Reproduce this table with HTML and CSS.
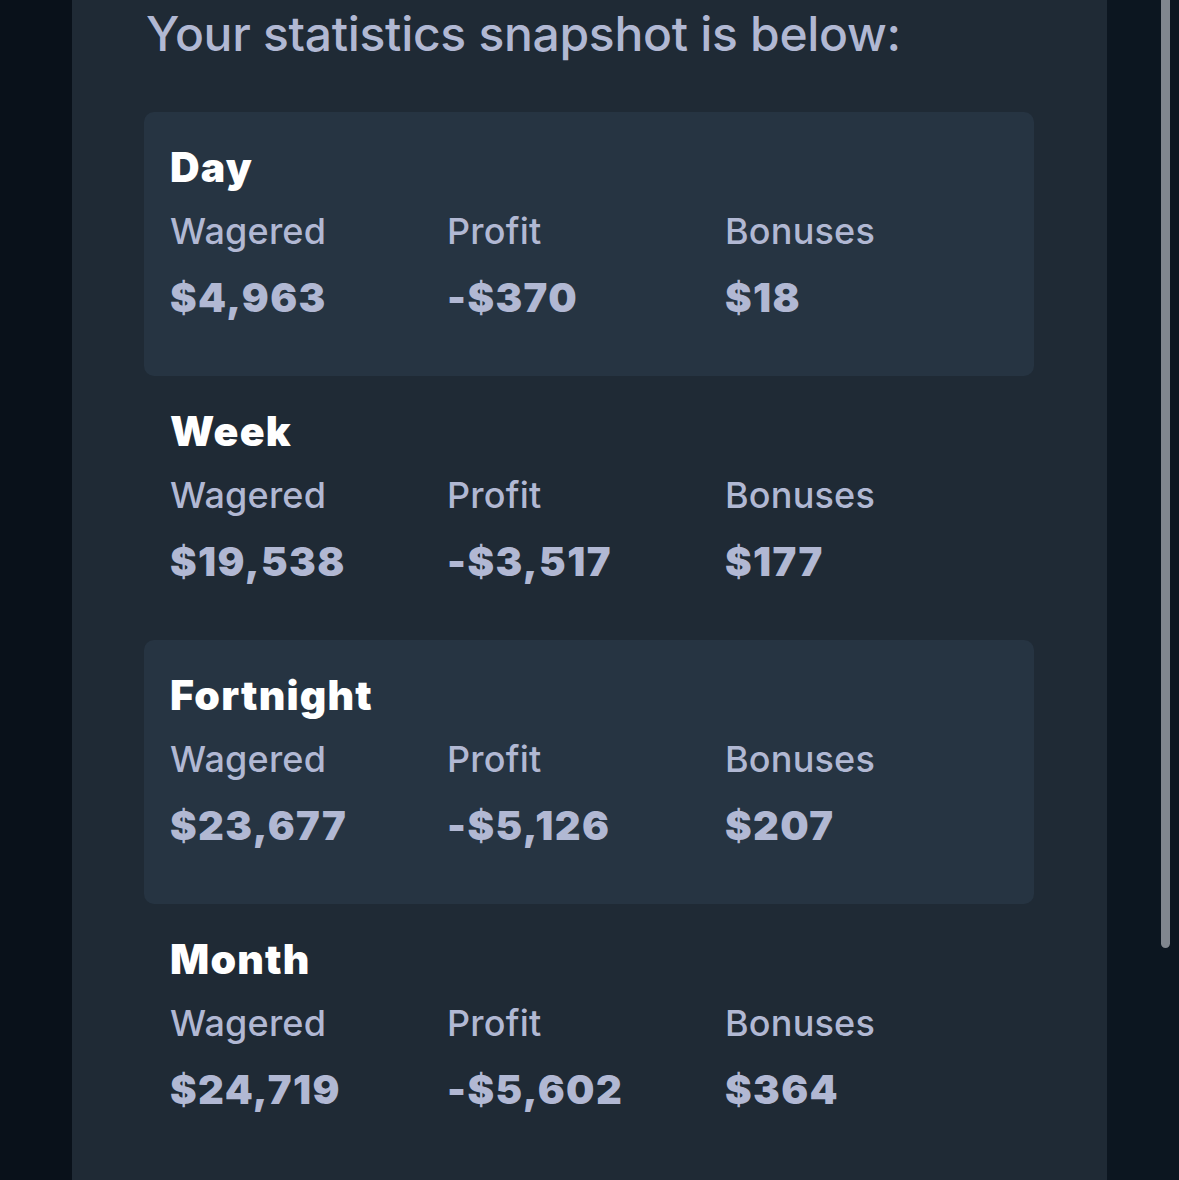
FILE: index.html
```html
<!DOCTYPE html>
<html>
<head>
<meta charset="utf-8">
<link rel="stylesheet" href="styles.css">
</head>
<body>
<div class="page">
  <div class="gutter-left"></div>
  <main class="panel">
    <h1 class="heading">Your statistics snapshot is below:</h1>
    <section class="period shaded">
      <h2 class="period-title">Day</h2>
      <div class="stats">
        <div class="stat"><div class="label">Wagered</div><div class="value">$4,963</div></div>
        <div class="stat"><div class="label">Profit</div><div class="value">-$370</div></div>
        <div class="stat"><div class="label">Bonuses</div><div class="value">$18</div></div>
      </div>
    </section>
    <section class="period">
      <h2 class="period-title">Week</h2>
      <div class="stats">
        <div class="stat"><div class="label">Wagered</div><div class="value">$19,538</div></div>
        <div class="stat"><div class="label">Profit</div><div class="value">-$3,517</div></div>
        <div class="stat"><div class="label">Bonuses</div><div class="value">$177</div></div>
      </div>
    </section>
    <section class="period shaded">
      <h2 class="period-title">Fortnight</h2>
      <div class="stats">
        <div class="stat"><div class="label">Wagered</div><div class="value">$23,677</div></div>
        <div class="stat"><div class="label">Profit</div><div class="value">-$5,126</div></div>
        <div class="stat"><div class="label">Bonuses</div><div class="value">$207</div></div>
      </div>
    </section>
    <section class="period">
      <h2 class="period-title">Month</h2>
      <div class="stats">
        <div class="stat"><div class="label">Wagered</div><div class="value">$24,719</div></div>
        <div class="stat"><div class="label">Profit</div><div class="value">-$5,602</div></div>
        <div class="stat"><div class="label">Bonuses</div><div class="value">$364</div></div>
      </div>
    </section>
  </main>
  <div class="gutter-right"><div class="scrollbar"></div></div>
</div>
</body>
</html>
```
FILE: styles.css
```css
html, body {
  margin: 0;
  padding: 0;
  background: #0c1620;
  height: 1180px;
  overflow: hidden;
}
.page {
  display: flex;
  height: 1180px;
  font-family: Inter, "Noto Sans", sans-serif;
}
.gutter-left {
  width: 72px;
  flex: none;
  background: #09111a;
}
.panel {
  width: 1035px;
  flex: none;
  background: #1f2a35;
  padding: 0 0 0 72px;
  box-sizing: border-box;
}
.heading {
  margin: 5px 0 0 2px;
  height: 107px;
  font-size: 48px;
  line-height: 58px;
  font-weight: 500;
  color: #b1b8d3;
  letter-spacing: -0.3px;
}
.period {
  width: 890px;
  height: 264px;
  box-sizing: border-box;
  padding: 30px 26px 0 26px;
  border-radius: 10px;
}
.period.shaded {
  background: #263442;
}
.period-title {
  margin: 0;
  font-size: 41px;
  line-height: 50px;
  font-weight: 900;
  letter-spacing: 1.2px;
  color: #ffffff;
}
.stats {
  display: grid;
  grid-template-columns: 277px 278px 278px;
  margin-top: 16px;
}
.label {
  font-size: 36px;
  line-height: 46px;
  font-weight: 500;
  letter-spacing: 0.2px;
  color: #b1b8d3;
}
.value {
  margin-top: 19px;
  font-size: 40px;
  line-height: 50px;
  font-weight: 900;
  letter-spacing: 1.4px;
  color: #b1b8d3;
}
.gutter-right {
  width: 72px;
  flex: none;
  background: #0c1620;
  padding-left: 54px;
  box-sizing: border-box;
}
.scrollbar {
  width: 9px;
  height: 948px;
  background: #80868e;
  border-radius: 0 0 5px 5px;
}
```
